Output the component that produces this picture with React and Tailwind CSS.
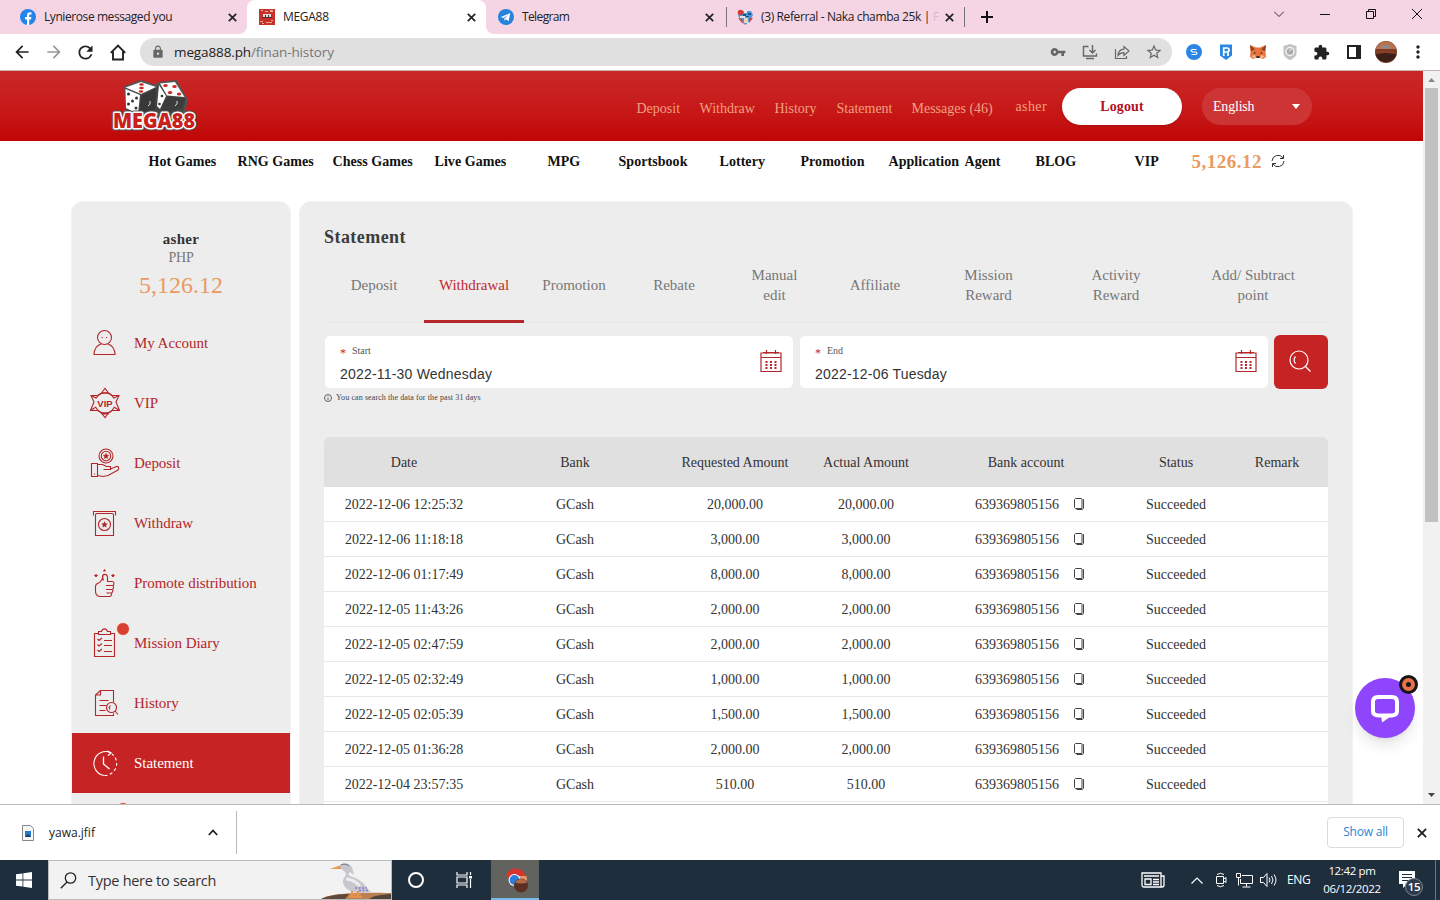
import { MdArrowBack, MdArrowForward, MdRefresh, MdLock, MdVpnKey, MdStarBorder, MdExtension, MdMoreVert } from "react-icons/md";
import clsx from "clsx";

const UI_FONT = "font-['Open_Sans','Noto_Sans',sans-serif]";
const SERIF = "font-['Liberation_Serif','Times_New_Roman',serif]";

const topLinks = [
  { label: "Deposit", width: "w-[63px]" },
  { label: "Withdraw", width: "w-[75px]" },
  { label: "History", width: "w-[62px]" },
  { label: "Statement", width: "w-[75px]" },
  { label: "Messages (46)", width: "w-[104px]" },
];

const navLinks = [
  { label: "Hot Games", width: "w-[89px]" },
  { label: "RNG Games", width: "w-[95px]" },
  { label: "Chess Games", width: "w-[102px]" },
  { label: "Live Games", width: "w-[113px]" },
  { label: "MPG", width: "w-[71px]" },
  { label: "Sportsbook", width: "w-[101px]" },
  { label: "Lottery", width: "w-[81px]" },
  { label: "Promotion", width: "w-[88px]" },
  { label: "Application", width: "w-[76px]" },
  { label: "Agent", width: "w-[71px]" },
  { label: "BLOG", width: "w-[99px]" },
  { label: "VIP", width: "w-[57px]" },
];

const menu = [
  { label: "My Account", icon: AccountIcon },
  { label: "VIP", icon: VipIcon },
  { label: "Deposit", icon: DepositIcon },
  { label: "Withdraw", icon: WithdrawIcon },
  { label: "Promote distribution", icon: PromoteIcon },
  { label: "Mission Diary", icon: MissionIcon, dot: true },
  { label: "History", icon: HistoryIcon },
  { label: "Statement", icon: ClockIcon, active: true },
];

const tabs = [
  { lines: ["Deposit"], width: "w-[100px]" },
  { lines: ["Withdrawal"], width: "w-[100px]", active: true },
  { lines: ["Promotion"], width: "w-[100px]" },
  { lines: ["Rebate"], width: "w-[100px]" },
  { lines: ["Manual", "edit"], width: "w-[101px]" },
  { lines: ["Affiliate"], width: "w-[100px]" },
  { lines: ["Mission", "Reward"], width: "w-[127px]" },
  { lines: ["Activity", "Reward"], width: "w-[128px]" },
  { lines: ["Add/ Subtract", "point"], width: "w-[146px]" },
];

const rows = [
  ["2022-12-06 12:25:32", "20,000.00"],
  ["2022-12-06 11:18:18", "3,000.00"],
  ["2022-12-06 01:17:49", "8,000.00"],
  ["2022-12-05 11:43:26", "2,000.00"],
  ["2022-12-05 02:47:59", "2,000.00"],
  ["2022-12-05 02:32:49", "1,000.00"],
  ["2022-12-05 02:05:39", "1,500.00"],
  ["2022-12-05 01:36:28", "2,000.00"],
  ["2022-12-04 23:57:35", "510.00"],
];

const GRID = "grid grid-cols-[160px_182px_138px_124px_196px_104px_100px] items-center text-center";

/* ---------- sidebar icons ---------- */

function LineIcon({ children }) {
  return (
    <svg width="32" height="32" viewBox="0 0 32 32" fill="none" stroke="currentColor" strokeWidth="1.1" className="shrink-0">
      {children}
    </svg>
  );
}

function AccountIcon() {
  return (
    <LineIcon>
      <circle cx="15.500" cy="10.500" r="7" />
      <path d="M12.500 10.500h1.200M17 10.500h1.200" />
      <path d="M12 17C7.500 18.500 5.200 22 5 27.500h21C25.800 22 23.500 18.500 19 17" />
    </LineIcon>
  );
}

function VipIcon() {
  return (
    <LineIcon>
      <path d="M12.500 6L16 1.500 19.500 6M19.500 26L16 30.500 12.500 26" />
      <path d="M9 8.500H2L5 15 1.500 23.500H9M23 8.500h7L27 15l3.500 8.500H23" />
      <path d="M9 8.500L12.500 6h7L23 8.500M9 23.500l3.500 2.500h7l3.500-2.500M2 8.500l5 2.500M30 8.500L25 11M1.500 23.500L7 20M30.500 23.500L25 20M12.500 27h7" />
      <path d="M7 11.500a10 10 0 0 1 18 0M7 20.500a10 10 0 0 0 18 0" />
      <text x="16" y="19.500" textAnchor="middle" fill="currentColor" stroke="none" className="font-['Liberation_Sans',sans-serif] text-[9.500px] font-bold">VIP</text>
    </LineIcon>
  );
}

function DepositIcon() {
  return (
    <LineIcon>
      <circle cx="17" cy="9" r="7" />
      <circle cx="17" cy="9" r="4.700" />
      <path d="M17 6l.9 1.900 2.100.3-1.500 1.400.3 2.100-1.800-1-1.800 1 .3-2.100L14 8.200l2.100-.3z" fill="currentColor" strokeWidth=".3" />
      <path d="M2.500 16.500h6v13h-6zM5.500 26.500v1" />
      <path d="M8.500 17.500h5l4 2h4v3h-7M21.500 22l6-2.500c2-.5 3 2 1.500 3.500L19 28.500l-5 1-5.500-1" />
    </LineIcon>
  );
}

function WithdrawIcon() {
  return (
    <LineIcon>
      <path d="M4.500 8.500v-4h22v4" />
      <path d="M6.500 28.500V8q0-1.500 1.500-1.500h15q1.500 0 1.500 1.500v20.500z" />
      <circle cx="15.500" cy="17.500" r="6" />
      <path d="M15.500 14.500l.9 1.900 2.100.3-1.500 1.400.3 2.100-1.800-1-1.800 1 .3-2.100-1.500-1.400 2.100-.3z" fill="currentColor" strokeWidth=".3" />
    </LineIcon>
  );
}

function PromoteIcon() {
  return (
    <LineIcon>
      <path d="M15.500 2.500l1 1.500h-2zM5.500 8.500L7 7.500l1.500 1L7 10zM22.500 8.500l1.500-1 1.500 1L24 10z" fill="currentColor" strokeWidth=".8" />
      <path d="M14.500 13.500L13.500 10c0-3.500 4.500-3.500 5 0v4.500h5c2 0 2 4 0 4h-6.500M24 18.500c1 1.500.5 4-1 4h-6M23.500 22.500c.8 1.500 0 3.500-1.500 3.500h-4.500M22.500 26c.5 2-.5 3.500-2 3.500h-9c-3 0-5-2-5-5v-5c0-2 1.500-3 3-3.500 2-1 4-4 4.500-7" />
    </LineIcon>
  );
}

function MissionIcon() {
  return (
    <LineIcon>
      <path d="M10 6.500H5.500v23h20v-23H21" />
      <path d="M9.500 7.500v-3h3c1-3.500 5-3.500 6 0h3v3z" />
      <path d="M8.500 12l1.500 1.500 3-2.500M8.500 17.500L10 19l3-2.500M8.500 23l1.500 1.500 3-2.500M15 13.500h8M15 18.500h8M15 24.500h8" />
    </LineIcon>
  );
}

function HistoryIcon() {
  return (
    <LineIcon>
      <path d="M11.500 3.500h13v12M11.500 3.500v4.500h-5M11.500 3.500l-5 4.500v20.500h18v-2" />
      <path d="M10.500 13.500h9M10.500 18.500h7M10.500 23.500h6" />
      <circle cx="22.500" cy="20.500" r="5" />
      <path d="M21.500 18.500l-1.500 2 1 2M26 24l3 3.500" />
    </LineIcon>
  );
}

function ClockIcon() {
  return (
    <LineIcon>
      <path d="M21.500 5.500A12 12 0 1 0 15.500 28.500" />
      <path d="M15.500 28.500A12 12 0 0 0 23 7" strokeDasharray="3 2.500" />
      <path d="M18 4l4 2-3 2.500M14.500 9.500V17l6 5" strokeWidth="1.300" />
    </LineIcon>
  );
}

/* ---------- browser chrome ---------- */

function CloseGlyph({ size = 9 }) {
  return (
    <svg width={size} height={size} viewBox="0 0 9 9" stroke="#222" strokeWidth="1.700" className="shrink-0">
      <path d="M.8.8l7.400 7.400M8.200.8L.8 8.200" />
    </svg>
  );
}

function TabStrip() {
  return (
    <div className={clsx("flex h-[34px] bg-white text-[12px] text-[#222]", UI_FONT)}>
      <div className="flex w-[247px] items-center rounded-br-lg bg-[#f5d5e4] pl-5 pr-[10px]">
        <svg width="16" height="16" viewBox="0 0 16 16">
          <circle cx="8" cy="8" r="8" fill="#2583ec" />
          <path d="M7 16v-5.500H5V8h2V6.300c0-2 1.200-3 3-3l1.500.1v2.100h-1C9.500 5.500 9.200 6 9.200 6.700V8h2.200l-.4 2.500H9.200V16z" fill="#fff" />
        </svg>
        <span className="ml-2 flex-1 tracking-[-0.42px]">Lynierose messaged you</span>
        <CloseGlyph />
      </div>
      <div className="w-[239px] bg-[#f5d5e4]">
        <div className="flex h-[34px] items-center rounded-t-lg bg-white pl-3 pr-[10px]">
          <svg width="16" height="16" viewBox="0 0 16 16">
            <path fill="#c9302a" d="M0 0h16v16H0z" />
            <path fill="#e8b090" d="M2 1h2v1H2zM6 2h3v1H6zM11 1h3v2h-3zM1 12h3v1H1zM7 13h6v1H7zM3 14h2v1H3zM12 11h2v1h-2z" />
            <path fill="#ddd" d="M4 5h8v4H4z" />
            <path fill="#4a3030" d="M6 6h1v2H6zM9 6h1v2H9zM3 8h10v1H3z" />
          </svg>
          <span className="ml-2 flex-1 tracking-[-0.3px]">MEGA88</span>
          <CloseGlyph />
        </div>
      </div>
      <div className="flex w-[240px] items-center rounded-bl-lg bg-[#f5d5e4] pl-3 pr-[12px]">
        <svg width="16" height="16" viewBox="0 0 16 16">
          <circle cx="8" cy="8" r="8" fill="#2583dc" />
          <path d="M2.800 7.900l9.500-3.800-1.700 8.200-2.800-2-1.500 1.500V9.500l4-3.500-5 3.100z" fill="#fff" />
        </svg>
        <span className="ml-2 flex-1 tracking-[-0.62px]">Telegram</span>
        <CloseGlyph />
      </div>
      <div className="flex w-[238px] items-center bg-[#f5d5e4] pr-[10px]">
        <span className="h-5 w-px bg-[#777]" />
        <svg width="17" height="17" viewBox="0 0 17 17" className="ml-[10px] shrink-0">
          <path fill="#4a9bd8" d="M5 2h9l2 4-3 6-5 4-5-5-2-5z" />
          <path fill="#e8e4e8" d="M7 1h3v3H7zM3 7h5v2H3z" />
          <circle cx="3.500" cy="3.500" r="2.800" fill="#d93832" />
          <path fill="#1f4f8a" d="M6 5h3v2H6zM11 4h3v2h-3zM9 7h3v1H9z" />
          <path fill="#f0d0b8" d="M7 9h4v5H7z" />
          <path fill="#cf4436" d="M12 9h4l-4 5zM1 9l5 6-1-5z" />
        </svg>
        <span className="ml-[7px] flex-1 whitespace-nowrap tracking-[-0.38px]">
          (3) Referral - Naka chamba 25k | <span className="text-[#dcb9c9]">F</span>
        </span>
        <CloseGlyph />
      </div>
      <div className="flex flex-1 items-center justify-between bg-[#f5d5e4] pr-[18px]">
        <div className="flex items-center gap-4">
          <span className="h-5 w-px bg-[#777]" />
          <svg width="12" height="12" viewBox="0 0 12 12" stroke="#111" strokeWidth="2"><path d="M6 0v12M0 6h12" /></svg>
        </div>
        <div className="flex items-center gap-[36px] pb-[6px]">
          <svg width="10" height="6" viewBox="0 0 10 6" fill="none" stroke="#333"><path d="M0 .5l5 5 5-5" /></svg>
          <svg width="10" height="10" viewBox="0 0 10 10" stroke="#111"><path d="M0 5.500h10" /></svg>
          <svg width="10" height="10" viewBox="0 0 10 10" fill="none" stroke="#111"><path d="M.5 2.500h7v7h-7zM2.500 2.500v-2h7v7h-2" /></svg>
          <svg width="10" height="10" viewBox="0 0 10 10" stroke="#111"><path d="M0 0l10 10M10 0L0 10" /></svg>
        </div>
      </div>
    </div>
  );
}

function Toolbar() {
  return (
    <div className={clsx("flex h-[37px] items-center border-b border-[#c9b4b4] bg-white pl-3 text-[#222]", UI_FONT)}>
      <MdArrowBack size={20} />
      <MdArrowForward size={20} className="ml-3 text-[#999]" />
      <MdRefresh size={21} className="ml-[11px]" />
      <svg width="16" height="17" viewBox="0 0 16 17" fill="none" stroke="#222" strokeWidth="1.900" className="ml-[14px]">
        <path d="M.8 8.800L8 1.500l7.200 7.300M3 7.500v8h10v-8" />
      </svg>
      <div className="ml-[14px] flex h-7 w-[1032px] items-center rounded-full bg-[#e0e0e0] pl-[11px] pr-[9px] text-[#666]">
        <MdLock size={14} />
        <span className="ml-[9px] flex-1 text-[13.500px] tracking-[-0.12px] text-[#777]">
          <span className="text-[#222]">mega888.ph</span>/finan-history
        </span>
        <div className="flex items-center gap-4">
          <MdVpnKey size={16} />
          <svg width="16" height="16" viewBox="0 0 16 16" fill="none" stroke="currentColor" strokeWidth="1.400">
            <path d="M6.500 2.500h-5v9.500h13V9.500M4 14.500h8M10.500 1v7.500M7.500 6l3 3 3-3" />
          </svg>
          <svg width="16" height="16" viewBox="0 0 16 16" fill="none" stroke="currentColor" strokeWidth="1.200">
            <path d="M1.500 5v9.500h11V12M4 11.500c.3-4 2.500-6 6-6.300V2.500L15 7l-5 4.500V8.700C7.500 8.700 5.500 9.500 4 11.500z" />
          </svg>
          <MdStarBorder size={18} className="-ml-px" />
        </div>
      </div>
      <div className="ml-[14px] flex items-center gap-4">
        <svg width="16" height="16" viewBox="0 0 16 16">
          <circle cx="8" cy="8" r="8" fill="#2b86e3" />
          <path d="M10.500 5.500H6L5 6.700 6.500 8h3.500L11 9.300 10 10.500H5.500" fill="none" stroke="#fff" strokeWidth="1.100" />
        </svg>
        <svg width="16" height="16" viewBox="0 0 16 16">
          <path d="M2 .5h12v11L8 16l-6-4.500z" fill="#2b86e3" />
          <path d="M5.700 12V4h3.300a2 2 0 0 1 0 4H6l4 0v4" fill="none" stroke="#fff" strokeWidth="1.700" />
        </svg>
        <svg width="16" height="16" viewBox="0 0 16 16">
          <path d="M0 1l6 2.500h4L16 1l-.5 7 .5 5-3 2-3-1H6l-3 1-3-2 .5-5z" fill="#e8723c" />
          <path d="M0 1l5 4.500L1 7zM16 1l-5 4.500L15 7z" fill="#8c4127" />
          <path d="M4 8l2 1-2 1zM12 8l-2 1 2 1zM6.500 12h3v2h-3z" fill="#3b2a28" />
          <path d="M1 12l4-1 1 2.500-2 1zM15 12l-4-1-1 2.500 2 1z" fill="#f3b596" />
        </svg>
        <svg width="16" height="16" viewBox="0 0 16 16">
          <path d="M1.500 2L8 0l6.500 2v7c0 3-3 5.500-6.500 7-3.500-1.500-6.500-4-6.500-7z" fill="#c2c2c2" />
          <circle cx="8" cy="7.500" r="4" fill="#aaa" stroke="#f2f2f2" strokeWidth="1.500" />
          <path d="M7 7l4-3" stroke="#eee" />
        </svg>
        <MdExtension size={17} className="-ml-px" />
        <svg width="14" height="14" viewBox="0 0 14 14" className="ml-px">
          <path d="M1 1h12v12H1z" fill="none" stroke="#222" strokeWidth="2" />
          <path d="M9 1h5v12H9z" fill="#222" />
        </svg>
        <Avatar size={22} />
        <MdMoreVert size={20} className="-ml-[5px]" />
      </div>
    </div>
  );
}

function Avatar({ size }) {
  return (
    <svg width={size} height={size} viewBox="0 0 22 22" className="-ml-[2px] shrink-0">
      <circle cx="11" cy="11" r="11" fill="#7b3d25" />
      <path d="M2 5a11 11 0 0 1 18 0q1.500 2 1.500 3H.5q0-1 1.500-3z" fill="#b9714e" />
      <path d="M6 5q4-2 9 0l1 2.500H5z" fill="#8f8a88" />
      <path d="M.5 13.500q10-3 21 0a11 11 0 0 1-21 0z" fill="#3b1f18" />
      <path d="M3 10h16v2H3z" fill="#8c3f22" />
    </svg>
  );
}

/* ---------- site ---------- */

function Logo() {
  return (
    <svg width="104" height="64" viewBox="-9 -3 104 64" className="mt-[6px] overflow-visible">
      <path d="M14 7L30 1l15 5 3-3 17-2 8 14 3 5-3 12-15 5H22l-6-5z" fill="#444" stroke="#555" strokeWidth="2" strokeLinejoin="round" />
      <path d="M14.500 7.500L30 2l15 5-15 7z" fill="#fff" />
      <path d="M14.500 9L29 15l-2 19-12-6z" fill="#fff" />
      <path d="M30.500 15.500L45 8.500 44 30l-16 4z" fill="#383838" />
      <path d="M49 3.500L64 2l9.500 15L56 15.500z" fill="#fff" />
      <path d="M48 5l7 11-6 13-3-3z" fill="#fff" />
      <path d="M57 17l17 1.500L71 28l-17 5-4-4z" fill="#3c3c3c" />
      <g fill="#cc2a20">
        <ellipse cx="30.500" cy="4.500" rx="2.300" ry="1.200" />
        <ellipse cx="30.500" cy="8" rx="2.300" ry="1.200" />
        <ellipse cx="30" cy="11.500" rx="2.300" ry="1.200" />
        <ellipse cx="54.500" cy="5.500" rx="2.200" ry="1.500" />
        <ellipse cx="63.500" cy="6.500" rx="2.200" ry="1.500" />
        <ellipse cx="59" cy="12.500" rx="2.200" ry="1.500" />
        <ellipse cx="68" cy="14" rx="2.200" ry="1.500" />
      </g>
      <g fill="#333">
        <circle cx="17.500" cy="14" r="1.500" />
        <circle cx="25.500" cy="18" r="1.500" />
        <circle cx="21.500" cy="21" r="1.500" />
        <circle cx="17.500" cy="24" r="1.500" />
        <circle cx="25" cy="28" r="1.500" />
        <circle cx="51" cy="16" r="1.300" />
        <circle cx="48.500" cy="24" r="1.300" />
      </g>
      <path d="M39 21q1 4-2 5M66 21q1 3-2 5" stroke="#ddd" fill="none" />
      <g textAnchor="middle" strokeLinejoin="round" className="font-['Open_Sans',sans-serif] text-[20.500px] font-extrabold">
        <text x="43" y="48" textLength="82" lengthAdjust="spacingAndGlyphs" stroke="#555" strokeWidth="5">MEGA88</text>
        <text x="43" y="48" textLength="82" lengthAdjust="spacingAndGlyphs" fill="#c9201c" stroke="#fff" strokeWidth="3" paintOrder="stroke">MEGA88</text>
      </g>
    </svg>
  );
}

function SiteHeader() {
  return (
    <header className="flex h-[70px] items-center bg-linear-to-b from-[#c82828] via-[#c81a1a] to-[#c00404] pl-[102px] text-[14px] text-[#f0a080]">
      <Logo />
      <nav className="ml-[430.500px] flex pt-1">
        {topLinks.map((l) => (
          <span key={l.label} className={clsx("shrink-0 whitespace-nowrap", l.width)}>{l.label}</span>
        ))}
      </nav>
      <span className="w-[46.500px] shrink-0 tracking-[0.4px]">asher</span>
      <button className="h-[37px] w-[120px] shrink-0 rounded-full bg-white text-[14px] font-bold tracking-[0.1px] text-[#b5101a] shadow-sm">Logout</button>
      <div className="ml-5 flex h-[37px] w-[110px] items-center justify-between rounded-full bg-[#cd3535] pl-[11px] pr-[12px] text-white">
        <span className="tracking-[-0.2px]">English</span>
        <svg width="8" height="5" viewBox="0 0 8 5" fill="#fff"><path d="M0 0h8L4 5z" /></svg>
      </div>
    </header>
  );
}

function MainNav() {
  return (
    <nav className="flex h-[60px] items-start bg-white pl-[148.500px] pt-[10px] text-[14px] font-bold leading-[21px] text-[#111]">
      {navLinks.map((l) => (
        <span key={l.label} className={clsx("shrink-0 whitespace-nowrap tracking-[0.05px]", l.width)}>{l.label}</span>
      ))}
      <span className="text-[19px] tracking-[0.5px] text-[#ea9a5e]">5,126.12</span>
      <svg width="14" height="14" viewBox="0 0 14 14" fill="none" stroke="#333" className="ml-[9px] mt-[3px]">
        <path d="M1 7a6 6 0 0 1 11-3M13 7a6 6 0 0 1-11 3M12.500 1v3.500H9M1.500 13V9.500H5" />
      </svg>
    </nav>
  );
}

function NotifyDot() {
  return <span className="absolute left-[44px] top-[9px] size-[14px] rounded-full border border-[#fbeee0] bg-[#d8402f]" />;
}

function Sidebar() {
  return (
    <aside className="h-[640px] w-[220px] shrink-0 rounded-xl border border-[#f2f2f2] bg-[#ededed] pt-[28px] text-[15px]">
      <div className="flex flex-col items-center pb-3">
        <span className="text-[15px] font-bold leading-[18px] tracking-[0.3px] text-[#333]">asher</span>
        <span className="pt-px text-[14px] leading-[18px] tracking-[-0.3px] text-[#777]">PHP</span>
        <span className="mt-[2px] text-[24px] leading-[32px] text-[#ea9a62]">5,126.12</span>
      </div>
      {menu.map((m) => (
        <div
          key={m.label}
          className={clsx(
            "relative flex h-[60px] items-center pl-[17px]",
            m.active ? "bg-[#c62424] text-white" : "text-[#b3262a]"
          )}
        >
          <m.icon />
          <span className="ml-[13px] tracking-[-0.05px]">{m.label}</span>
          {m.dot && <NotifyDot />}
        </div>
      ))}
      <div className="relative h-[60px]">
        <NotifyDot />
      </div>
    </aside>
  );
}

function DateField({ label, value }) {
  return (
    <div className="flex h-[54px] w-[470px] items-center justify-between rounded-md border border-[#ececec] bg-white pl-[15px] pr-[11px]">
      <div className="flex flex-col pt-1">
        <span className="flex items-center text-[10px] leading-[14px] text-[#555]">
          <span className="w-[12px] pt-[5px] text-[12px] leading-[9px] text-[#c62424]">*</span>
          {label}
        </span>
        <span className="mt-[6px] font-['Liberation_Sans',Arial,sans-serif] text-[14px] leading-[20px] tracking-[0.2px] text-[#333]">{value}</span>
      </div>
      <svg width="22" height="24" viewBox="0 0 22 24" fill="none" stroke="#b3262a" strokeWidth="1.200" className="-mt-[2px]">
        <path d="M1 4h20v18.500H1zM1 8.500h20M3 3.500h16M6.500 1v4M15.500 1v4M2.500 22.500h17" />
        <path d="M5.500 13h11M5.500 16h11M5.500 19h11" strokeWidth="2" strokeDasharray="2 2.500" />
      </svg>
    </div>
  );
}

function StatementPanel() {
  return (
    <section className="h-[640px] w-[1054px] shrink-0 rounded-xl border border-[#f2f2f2] bg-[#ededed] px-6 pt-[24px]">
      <h1 className="text-[18px] font-bold leading-[22px] tracking-[0.45px] text-[#3c3c3c]">Statement</h1>
      <div className="flex h-[75px] border-b border-[#e6e6e6] text-[15px] leading-5 text-[#777]">
        {tabs.map((t) => (
          <div
            key={t.lines[0]}
            className={clsx(
              "flex h-[75px] shrink-0 flex-col items-center justify-center border-b-3 pt-[2px]",
              t.width,
              t.active ? "border-[#b3262a] text-[#c02a2a]" : "border-transparent"
            )}
          >
            {t.lines.map((line) => (
              <span key={line}>{line}</span>
            ))}
          </div>
        ))}
      </div>

      <div className="mt-3 flex items-center gap-[5px]">
        <DateField label="Start" value="2022-11-30 Wednesday" />
        <DateField label="End" value="2022-12-06 Tuesday" />
        <button className="flex h-[54px] w-[54px] shrink-0 items-center justify-center rounded-md bg-[#c62424]">
          <svg width="22" height="24" viewBox="0 0 22 24" fill="none" stroke="#fff" strokeWidth="1.200" className="-mt-[2px] mr-[2px]">
            <circle cx="10" cy="11" r="9" />
            <path d="M6.500 7.500a5 5 0 0 0 0 7M16.500 17.500l5 5" />
          </svg>
        </button>
      </div>
      <p className="mt-[3px] flex h-3 items-center text-[8px] tracking-[0.1px] text-[#444]">
        <svg width="8" height="8" viewBox="0 0 8 8" fill="none" stroke="#555" strokeWidth=".9" className="mr-1">
          <circle cx="4" cy="4" r="3.500" />
          <path d="M4 1.800v.8M4 3.500v2.700" />
        </svg>
        You can search the data for the past 31 days
      </p>

      <div className="mt-[33px] h-[367px] text-[14px] text-[#333]">
        <div className={clsx(GRID, "h-[50px] rounded-t-md bg-[#e0e0e0]")}>
          <span>Date</span>
          <span>Bank</span>
          <span>Requested Amount</span>
          <span>Actual Amount</span>
          <span>Bank account</span>
          <span>Status</span>
          <span className="pr-[2px]">Remark</span>
        </div>
        {rows.map(([date, amount]) => (
          <div key={date} className={clsx(GRID, "h-[35px] border-b border-[#e8e8e8] bg-white")}>
            <span>{date}</span>
            <span>GCash</span>
            <span>{amount}</span>
            <span>{amount}</span>
            <span className="flex items-center justify-center gap-[15px] pl-[7px]">
              639369805156
              <svg width="10" height="12" viewBox="0 0 10 12" fill="none" stroke="#444">
                <path d="M.5 1.500l1-1h6l.5 1v9H1.500l-1-1zM8.500 1.500h1v9l-1 1h-6" />
              </svg>
            </span>
            <span>Succeeded</span>
            <span />
          </div>
        ))}
        <div className="h-[35px] bg-white" />
      </div>
    </section>
  );
}

function ChatBubble() {
  return (
    <div className="absolute left-[1355px] top-[607px] flex size-[60px] items-center justify-center rounded-full bg-[#8f45fb] shadow-lg">
      <svg width="28" height="27" viewBox="0 0 28 27">
        <path d="M7 2h14q5 0 5 5v9q0 4-5 4.500H7q-5-.5-5-4.500V7q0-5 5-5z" fill="none" stroke="#fff" strokeWidth="4" />
        <path d="M10 19h10l-1 3-8 5.500z" fill="#fff" />
      </svg>
      <span className="absolute -right-[3px] -top-[3px] flex size-[19px] items-center justify-center rounded-full border-[3px] border-[#161616] bg-[#e8724a]">
        <span className="size-[5px] rounded-full bg-[#161616]" />
      </span>
    </div>
  );
}

function PageScrollbar() {
  return (
    <div className="flex w-[17px] shrink-0 flex-col items-center bg-[#f1f1f1]">
      <svg width="7" height="4" viewBox="0 0 7 4" className="mt-[7px]" fill="#888"><path d="M0 4l3.500-4L7 4z" /></svg>
      <div className="mt-[6px] h-[434px] w-[13px] bg-[#c1c1c1]" />
      <svg width="7" height="4" viewBox="0 0 7 4" className="mt-auto mb-[7px]" fill="#444"><path d="M0 0h7L3.500 4z" /></svg>
    </div>
  );
}

/* ---------- downloads bar and taskbar ---------- */

function DownloadBar() {
  return (
    <div className={clsx("flex h-[56px] items-center border-t border-[#bbb] bg-white text-[12px]", UI_FONT)}>
      <div className="flex h-[43px] w-[237px] items-center border-r border-[#bbb] pl-[22px] pr-[18px]">
        <svg width="12" height="16" viewBox="0 0 12 16">
          <path d="M.5.5h8l3 3v12H.5z" fill="#f6f6f6" stroke="#888" />
          <path d="M3 6h6v6H3z" fill="#2878c8" />
          <path d="M3 12l3-3 3 3z" fill="#163f66" />
        </svg>
        <span className="ml-[15px] flex-1 text-[#222]">yawa.jfif</span>
        <svg width="10" height="7" viewBox="0 0 10 7" fill="none" stroke="#222" strokeWidth="1.800"><path d="M.8 6L5 1.500 9.200 6" /></svg>
      </div>
      <button className="ml-auto h-[31px] w-[77px] rounded border border-[#dadce0] pb-[2px] text-[12px] tracking-[-0.2px] text-[#2a84d0]">Show all</button>
      <span className="ml-[13px] mr-[13px]"><CloseGlyph size={10} /></span>
    </div>
  );
}

function Heron() {
  return (
    <svg width="72" height="38" viewBox="0 0 72 38" className="shrink-0">
      <path d="M2 38c8-5 28-7 70-6v6z" fill="#b98052" />
      <path d="M2 38c8-4 20-5 28-5l-4 5z" fill="#5e4a3c" />
      <path d="M50 38c5-4 12-4 22-5v5z" fill="#54423a" />
      <path d="M11 8L22 4l1 4z" fill="#e89a55" />
      <path d="M21 4c3-3 10-2 12 2l2 8-4-3c-2 1-2 3 0 4 8 2 14 7 17 12l4 4-9 1c-8 1-17-3-19-10-1-4 3-7 3-9 0-3-5-3-6-9z" fill="#c6c8ce" />
      <path d="M27 18c6 0 10 3 14 7" stroke="#eceded" strokeWidth="3" fill="none" />
      <path d="M22 4c3-1.500 6-1 8 1" stroke="#68717e" fill="none" />
      <path d="M36 27h12M40 29.500h9" stroke="#8d74cf" strokeWidth="1.300" strokeDasharray="2 1.500" />
      <path d="M33 30v6M39 30v6M30 36h13M31 33.500h11" stroke="#e5924e" strokeWidth="2" />
    </svg>
  );
}

function Taskbar() {
  return (
    <div className={clsx("flex h-10 items-center bg-[#1f2e3c] text-white", UI_FONT)}>
      <div className="flex w-12 justify-center">
        <svg width="16" height="16" viewBox="0 0 16 16" fill="#fff">
          <path d="M0 2.300L6.500 1.400v6.200H0zM7.300 1.300L16 0v7.600H7.300zM0 8.400h6.500v6.200L0 13.700zM7.300 8.400H16V16l-8.700-1.300z" />
        </svg>
      </div>
      <div className="flex h-10 w-[344px] items-center border border-[#bbb] bg-[#f2f2f2] pl-[11px] text-[#333]">
        <svg width="17" height="17" viewBox="0 0 17 17" fill="none" stroke="#222" strokeWidth="1.300">
          <circle cx="10.500" cy="6" r="5.200" />
          <path d="M7 10L.8 16.300" />
        </svg>
        <span className="ml-[11px] flex-1 pt-px text-[14.500px] tracking-[-0.28px]">Type here to search</span>
        <Heron />
      </div>
      <div className="flex w-12 justify-center">
        <span className="size-4 rounded-full border-[2.500px] border-white" />
      </div>
      <div className="flex w-[51px] justify-center pr-1">
        <svg width="16" height="16" viewBox="0 0 16 16" fill="none" stroke="#fff" strokeWidth="1.200">
          <path d="M1 0v3h10V0M1 16v-3h10v3M1 5h10v6H1zM14.500 0v3M14.500 7v9" />
          <path d="M13 4h3v2.500h-3z" fill="#fff" stroke="none" />
        </svg>
      </div>
      <div className="flex h-10 w-12 items-center justify-center border-b-2 border-[#76b9ed] bg-[#62635f]">
        <svg width="24" height="26" viewBox="0 0 24 26" className="ml-[3px] mt-[3px]">
          <path d="M1 7a10.500 10.500 0 0 1 20 2l-10 1-4 5z" fill="#d6342c" />
          <path d="M12 8h9.500a10 10 0 0 1-.5 7l-7-2z" fill="#e59a68" />
          <circle cx="9.500" cy="12" r="6" fill="#fff" />
          <circle cx="9.500" cy="12" r="4.900" fill="#2b7ddb" />
          <circle cx="16" cy="17.500" r="7" fill="#5b3024" />
          <path d="M10 14.500a7 7 0 0 1 12 0q-6 2-12 0z" fill="#b06a48" />
        </svg>
      </div>

      <div className="ml-auto flex h-10 items-center text-[12px]">
        <svg width="24" height="16" viewBox="0 0 24 16" fill="none" stroke="#fff" strokeWidth="1.300">
          <path d="M1 1h19v14H3q-2 0-2-2zM20 4h3v9q0 2-2 2h-2M3 4h15M4 7h6v5.500H4zM12 7.500h6M12 10h6M12 12.500h6" />
        </svg>
        <svg width="12" height="7" viewBox="0 0 12 7" fill="none" stroke="#fff" strokeWidth="1.200" className="ml-[26px]"><path d="M.5 6.500L6 1l5.500 5.500" /></svg>
        <svg width="12" height="16" viewBox="0 0 12 16" fill="none" stroke="#fff" className="ml-[12px]">
          <path d="M1.500 4.500h7v7h-7zM8.500 7l2.500-1.500v5L8.500 9M2 2.500q3.500-2.500 7 0M2 13.500q3.500 2.500 7 0" />
        </svg>
        <svg width="17" height="15" viewBox="0 0 17 15" fill="none" stroke="#fff" className="ml-[9px]">
          <path d="M6 2.500h10.500v8H4.500V6M.5.500h4v4h-4zM2.500 4.500v8M10.500 10.500v3M6.500 14h8" />
        </svg>
        <svg width="17" height="14" viewBox="0 0 17 14" fill="none" stroke="#fff" className="ml-[7px]">
          <path d="M.5 4.500h3l3.500-4v13l-3.500-4h-3zM9 4.500q2 2.500 0 5M11.500 3q3 4 0 8M14 1.500q4 5.500 0 11" />
        </svg>
        <span className="ml-[10px] w-[24px] tracking-[-0.3px]">ENG</span>
        <div className="ml-[10px] flex w-[62px] flex-col items-center whitespace-nowrap text-[11.500px] leading-[18px] tracking-[-0.35px]">
          <span>12:42 pm</span>
          <span>06/12/2022</span>
        </div>
        <div className="relative ml-[16px] h-[26px] w-[26px]">
          <svg width="16" height="17" viewBox="0 0 16 17" fill="#fff" className="mt-[4px]">
            <path d="M0 0h16v13H8l-4 4v-4H0z" />
            <path d="M3 3.500h10M3 6.500h10M3 9.500h7" stroke="#1f2e3c" strokeWidth="1.200" />
          </svg>
          <span className="absolute left-[6px] top-[11px] flex size-[18px] items-center justify-center rounded-full border border-[#7a8692] bg-[#2c3b49] text-[11.500px] font-semibold tracking-[-0.3px]">15</span>
        </div>
        <span className="ml-[10px] mr-1 h-10 w-px bg-[#6d7882]" />
      </div>
    </div>
  );
}

export default function App() {
  return (
    <div className="flex h-[900px] w-[1440px] flex-col overflow-hidden bg-white">
      <TabStrip />
      <Toolbar />
      <div className={clsx("relative flex h-[733px] overflow-hidden bg-white", SERIF)}>
        <main className="h-[733px] w-[1423px] shrink-0 overflow-hidden">
          <SiteHeader />
          <MainNav />
          <div className="flex gap-2 pl-[71px]">
            <Sidebar />
            <StatementPanel />
          </div>
        </main>
        <PageScrollbar />
        <ChatBubble />
      </div>
      <DownloadBar />
      <Taskbar />
    </div>
  );
}
